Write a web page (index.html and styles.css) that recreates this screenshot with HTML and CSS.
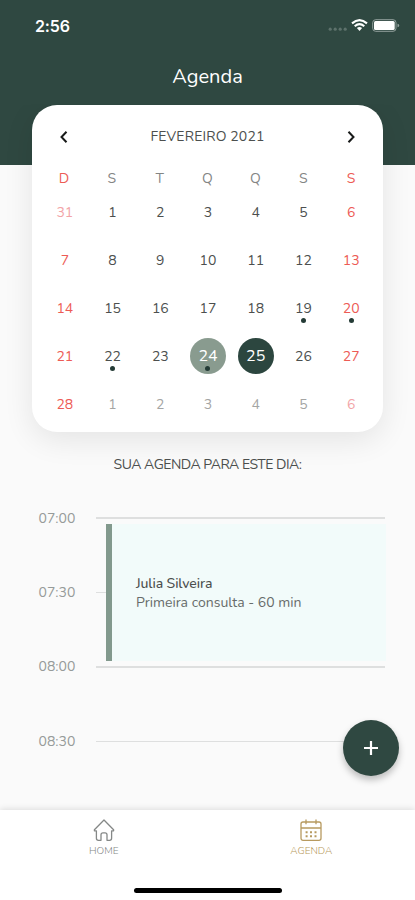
FILE: index.html
```html
<!DOCTYPE html>
<html lang="pt-BR">
<head>
<meta charset="utf-8">
<meta name="viewport" content="width=device-width, initial-scale=1">
<title>Agenda</title>
<link rel="stylesheet" href="styles.css">
</head>
<body>
<div class="app">
  <header class="header">
    <div class="status">
      <span class="clock">2:56</span>
      <svg class="status-icons" width="72" height="16" viewBox="0 0 72 16">
        <g fill="#5d716b"><circle cx="2.200" cy="11.200" r="1.600"/><circle cx="7.200" cy="11.200" r="1.600"/><circle cx="12.200" cy="11.200" r="1.600"/><circle cx="17.200" cy="11.200" r="1.600"/></g>
        <g fill="none" stroke="#fff" stroke-width="2.100"><path d="M24 5.400Q31.500 -1.300 39 5.400"/><path d="M26.700 8.300Q31.500 4.100 36.300 8.300"/></g>
        <path d="M28.900 10.100Q31.500 8 34.100 10.100L31.500 12.900Z" fill="#fff"/>
        <rect x="44.700" y="1.700" width="23.300" height="11.600" rx="3" fill="none" stroke="#93a19d"/>
        <rect x="46" y="3" width="20.700" height="9" rx="1.500" fill="#fff"/>
        <path d="M69.500 5.700Q71.200 6 71.200 7.500T69.500 9.300Z" fill="#93a19d"/>
      </svg>
    </div>
    <h1 class="title">Agenda</h1>
  </header>

  <main class="content">
    <section class="calendar">
      <div class="month">
        <svg class="chevron" width="16" height="16" viewBox="0 0 16 16"><path d="M10.500 2.700 5.500 8l5 5.300"/></svg>
        <h2 class="month-name">FEVEREIRO 2021</h2>
        <svg class="chevron" width="16" height="16" viewBox="0 0 16 16"><path d="m5.500 2.700 5 5.300-5 5.300"/></svg>
      </div>
      <div class="weekdays">
        <span class="weekend">D</span><span>S</span><span>T</span><span>Q</span><span>Q</span><span>S</span><span class="weekend">S</span>
      </div>
      <div class="days">
        <span class="day weekend outside">31</span><span class="day">1</span><span class="day">2</span><span class="day">3</span><span class="day">4</span><span class="day">5</span><span class="day weekend">6</span>
        <span class="day weekend">7</span><span class="day">8</span><span class="day">9</span><span class="day">10</span><span class="day">11</span><span class="day">12</span><span class="day weekend">13</span>
        <span class="day weekend">14</span><span class="day">15</span><span class="day">16</span><span class="day">17</span><span class="day">18</span><span class="day marked">19</span><span class="day weekend marked">20</span>
        <span class="day weekend">21</span><span class="day marked">22</span><span class="day">23</span><span class="day today marked">24</span><span class="day selected">25</span><span class="day">26</span><span class="day weekend">27</span>
        <span class="day weekend">28</span><span class="day outside">1</span><span class="day outside">2</span><span class="day outside">3</span><span class="day outside">4</span><span class="day outside">5</span><span class="day weekend outside">6</span>
      </div>
    </section>

    <h2 class="subtitle">SUA AGENDA PARA ESTE DIA:</h2>

    <section class="timeline">
      <div class="slot"><time>07:00</time><i class="line"></i></div>
      <div class="slot"><time>07:30</time><i class="line"></i></div>
      <div class="slot"><time>08:00</time><i class="line"></i></div>
      <div class="slot"><time>08:30</time><i class="line"></i></div>
      <article class="event">
        <strong class="event-name">Julia Silveira</strong>
        <span class="event-info">Primeira consulta - 60 min</span>
      </article>
      <button class="add" aria-label="Adicionar"><svg width="16" height="16" viewBox="0 0 16 16"><path d="M8 1v14M1 8h14"/></svg></button>
    </section>
  </main>

  <footer class="footer">
    <nav class="tabs">
      <a class="tab">
        <svg width="24" height="24" viewBox="0 0 24 24"><path d="M2.400 11.700 12 2l9.600 9.700v1.100h-2v7.500q0 2-2 2H15v-5.500q0-2-2-2h-2q-2 0-2 2v5.500H6.400q-2 0-2-2v-7.500h-2z"/></svg>
        <span class="label">HOME</span>
      </a>
      <a class="tab active">
        <svg width="24" height="24" viewBox="0 0 24 24"><rect x="2" y="4" width="20" height="18.300" rx="2"/><path d="M2 10h20M7 1.500v4.800M17 1.500v4.800"/><path class="dates" d="M6.600 14.300h2M11 14.300h2M15.500 14.300h2M6.600 18.200h2M11 18.200h2M15.500 18.200h2"/></svg>
        <span class="label">AGENDA</span>
      </a>
    </nav>
    <div class="home-indicator"></div>
  </footer>
</div>
</body>
</html>
```
FILE: styles.css
```css
* { box-sizing: border-box; }

body {
  margin: 0;
  background: #fafafa;
  color: #4c4f4e;
  font-family: Nunito, Lato, sans-serif;
}

h1, h2 { margin: 0; font-weight: 400; }

.app {
  width: 415px;
  height: 900px;
  display: flex;
  flex-direction: column;
  overflow: hidden;
}

.header {
  height: 165px;
  flex: none;
  background: #2f4841;
  color: #fff;
}

.status {
  display: flex;
  justify-content: space-between;
  align-items: center;
  height: 51px;
  padding: 0 15px 0 35px;
}

.clock {
  font: 600 16px/20px Inter, sans-serif;
  letter-spacing: -.1px;
}

.title {
  padding-top: 13px;
  font-size: 20px;
  line-height: 26px;
  text-align: center;
}

.content { flex: 1; }

.calendar {
  width: 351px;
  height: 327.500px;
  margin: -60.500px auto 0 32px;
  padding: 0 8px;
  border-radius: 25px;
  background: #fff;
  box-shadow: 0 8px 30px rgba(0, 0, 0, .09);
  clip-path: inset(0 -32px -50px);
  position: relative;
}

.month {
  height: 64px;
  display: flex;
  align-items: center;
  justify-content: space-between;
  padding: 0 16px;
}

.month-name { font-size: 14px; letter-spacing: .15px; }

.chevron {
  fill: none;
  stroke: #191b1a;
  stroke-width: 2;
}

.weekdays, .days {
  display: grid;
  grid-template-columns: repeat(7, 1fr);
  text-align: center;
}

.weekdays {
  height: 20px;
  align-items: center;
  font-size: 14px;
  color: #838584;
}

.weekdays .weekend, .day.weekend { color: #ed5b55; }

.days {
  grid-auto-rows: 47.900px;
  align-items: center;
  justify-items: center;
  padding-left: 1px;
}

.day {
  position: relative;
  width: 36px;
  height: 36px;
  font-size: 14px;
  line-height: 37px;
}

.day.outside { color: #a4a5a4; }
.day.weekend.outside { color: #f2a4a7; }

.today, .selected {
  border-radius: 50%;
  color: #fff;
  font-size: 16px;
  line-height: 36px;
}

.today { background: #899b8f; }
.selected { background: #2c463f; }

.marked::after {
  content: "";
  position: absolute;
  left: 15.500px;
  top: 27.500px;
  width: 5px;
  height: 5px;
  border-radius: 50%;
  background: #243b36;
}

.subtitle {
  height: 66px;
  font-size: 14px;
  line-height: 66px;
  letter-spacing: -.5px;
  text-align: center;
}

.timeline {
  position: relative;
  padding: 0 30px 0 38.500px;
  margin-top: -17px;
}

.slot {
  height: 74.400px;
  display: flex;
  align-items: center;
}

.slot time {
  width: 57.500px;
  font-size: 14px;
  color: #969b99;
}

.line {
  flex: 1;
  height: 1.500px;
  background: #dedfdf;
}

.event {
  position: absolute;
  left: 106px;
  right: 29px;
  top: 43px;
  height: 137px;
  display: flex;
  flex-direction: column;
  justify-content: center;
  padding-left: 24px;
  border-left: 6px solid #82998d;
  background: #f2fbfa;
  font-size: 14px;
  line-height: 19px;
}

.event-name { font-weight: 500; letter-spacing: -.1px; }
.event-info { color: #676c6a; }

.add {
  position: absolute;
  right: 16px;
  top: 239px;
  width: 56px;
  height: 56px;
  padding: 0;
  display: grid;
  place-items: center;
  border: 0;
  border-radius: 50%;
  background: #2f4841;
  box-shadow: 0 4px 7px rgba(0, 0, 0, .25);
}

.add svg { stroke: #fff; stroke-width: 2.200; }

.footer {
  flex: none;
  height: 90px;
  background: #fff;
  box-shadow: 0 -1px 6px rgba(0, 0, 0, .12);
}

.tabs { display: flex; height: 77.500px; }

.tab {
  flex: 1;
  display: flex;
  flex-direction: column;
  align-items: center;
  padding-top: 8px;
  font-size: 10px;
  line-height: 18px;
  color: #858887;
}

.label { font-weight: 300; }

.tab svg {
  fill: none;
  stroke: currentColor;
  stroke-width: 1.300;
  stroke-linejoin: round;
}

.tab .dates { stroke-width: 2; }
.tab.active { color: #b79a60; }

.home-indicator {
  width: 148px;
  height: 5px;
  margin-left: 134px;
  border-radius: 3px;
  background: #000;
}
```
